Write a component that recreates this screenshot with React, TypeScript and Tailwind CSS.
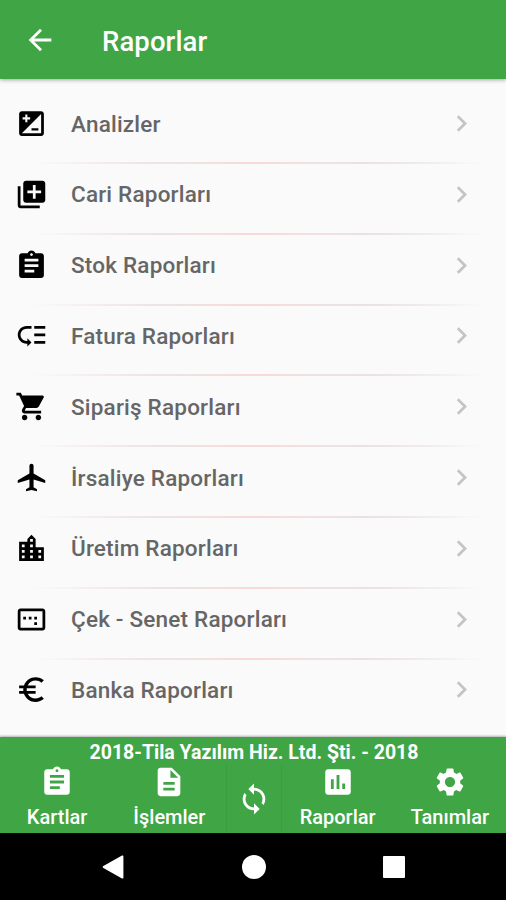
import type { IconType } from "react-icons";
import {
  MdArrowBack,
  MdAssessment,
  MdAssignment,
  MdChevronRight,
  MdDescription,
  MdEuroSymbol,
  MdImageAspectRatio,
  MdIso,
  MdLibraryAdd,
  MdLocalAirport,
  MdLocationCity,
  MdLowPriority,
  MdSettings,
  MdShoppingCart,
  MdSync,
} from "react-icons/md";

type Entry = {
  readonly label: string;
  readonly icon: IconType;
};

const reports: ReadonlyArray<Entry> = [
  { label: "Analizler", icon: MdIso },
  { label: "Cari Raporları", icon: MdLibraryAdd },
  { label: "Stok Raporları", icon: MdAssignment },
  { label: "Fatura Raporları", icon: MdLowPriority },
  { label: "Sipariş Raporları", icon: MdShoppingCart },
  { label: "İrsaliye Raporları", icon: MdLocalAirport },
  { label: "Üretim Raporları", icon: MdLocationCity },
  { label: "Çek - Senet Raporları", icon: MdImageAspectRatio },
  { label: "Banka Raporları", icon: MdEuroSymbol },
];

export default function App() {
  return (
    <div className="flex h-[900px] w-[506px] flex-col overflow-hidden bg-[#fafafa] font-['Roboto',sans-serif]">
      <header className="z-10 flex h-[79px] shrink-0 items-center bg-[#40a545] pl-[23px] text-white shadow-[0_1px_4px_rgba(0,0,0,0.35)]">
        <button type="button" aria-label="Geri">
          <MdArrowBack className="size-[34px]" />
        </button>
        <h1 className="ml-[45px] pt-[4px] text-[27.5px] leading-8 font-medium tracking-[0.1px]">Raporlar</h1>
      </header>

      <main className="flex-1 pt-[13.600px]">
        {reports.map((entry, index) => (
          <ReportRow key={entry.label} entry={entry} isLast={index === reports.length - 1} />
        ))}
      </main>

      <BottomBar />
      <SystemBar />
    </div>
  );
}

function ReportRow({ entry, isLast }: { readonly entry: Entry; readonly isLast: boolean }) {
  const Icon = entry.icon;

  return (
    <div className="flex h-[70.8px] flex-col">
      <button type="button" className="flex h-[62px] w-full shrink-0 items-center pl-[15px] text-left">
        <Icon className="size-[33px] text-black" />
        <span className="ml-[23px] flex-1 text-[22.5px] leading-7 font-medium tracking-[0.2px] text-[#666]">
          {entry.label}
        </span>
        <MdChevronRight className="mr-[28px] size-[33px] text-[#c4c4c4]" />
      </button>
      {!isLast && (
        <div className="mx-6 mt-[7.4px] h-[2px] shrink-0 bg-linear-to-r from-[#fafafa] via-[#f8d9d9] to-[#fafafa]">
          <div className="h-full bg-linear-to-r from-transparent from-5% via-[#dddddd]/40 via-30% to-transparent to-50%" />
          <div className="-mt-[2px] h-full bg-linear-to-r from-transparent from-50% via-[#dddddd]/60 via-75% to-transparent" />
        </div>
      )}
    </div>
  );
}

function BottomBar() {
  return (
    <footer className="flex h-[96px] shrink-0 flex-col bg-[#40a545] text-white shadow-[0_-1px_2px_rgba(0,0,0,0.3)]">
      <p className="h-[28px] pt-[4px] pl-[2px] text-center text-[19.5px] leading-6 font-bold">
        2018-Tila Yazılım Hiz. Ltd. Şti. - 2018
      </p>
      <nav className="flex flex-1 pl-px">
        <TabItem entry={{ label: "Kartlar", icon: MdAssignment }} />
        <TabItem entry={{ label: "İşlemler", icon: MdDescription }} />
        <button
          type="button"
          aria-label="Yenile"
          className="flex w-[56px] items-center justify-center border-x border-[#3c9c41]"
        >
          <MdSync className="size-[34px]" />
        </button>
        <TabItem entry={{ label: "Raporlar", icon: MdAssessment }} />
        <TabItem entry={{ label: "Tanımlar", icon: MdSettings }} />
      </nav>
    </footer>
  );
}

function TabItem({ entry }: { readonly entry: Entry }) {
  const Icon = entry.icon;

  return (
    <button type="button" className="flex flex-1 flex-col items-center">
      <Icon className="size-[34px]" />
      <span className="mt-[6px] text-[20px] leading-6 font-medium">{entry.label}</span>
    </button>
  );
}

function SystemBar() {
  return (
    <div className="flex h-[67px] shrink-0 items-center justify-center gap-[117px] bg-black text-white">
      <svg viewBox="0 0 24 24" className="-mr-px size-[24px] fill-current">
        <path d="M1.400 11.100 20 .600q1.400-.600 1.400.800v21.200q0 1.400-1.400.800L1.400 12.900q-1.500-.900 0-1.800z" />
      </svg>
      <span className="size-[24px] rounded-full bg-white" />
      <span className="size-[22px] rounded-[1px] bg-white" />
    </div>
  );
}
